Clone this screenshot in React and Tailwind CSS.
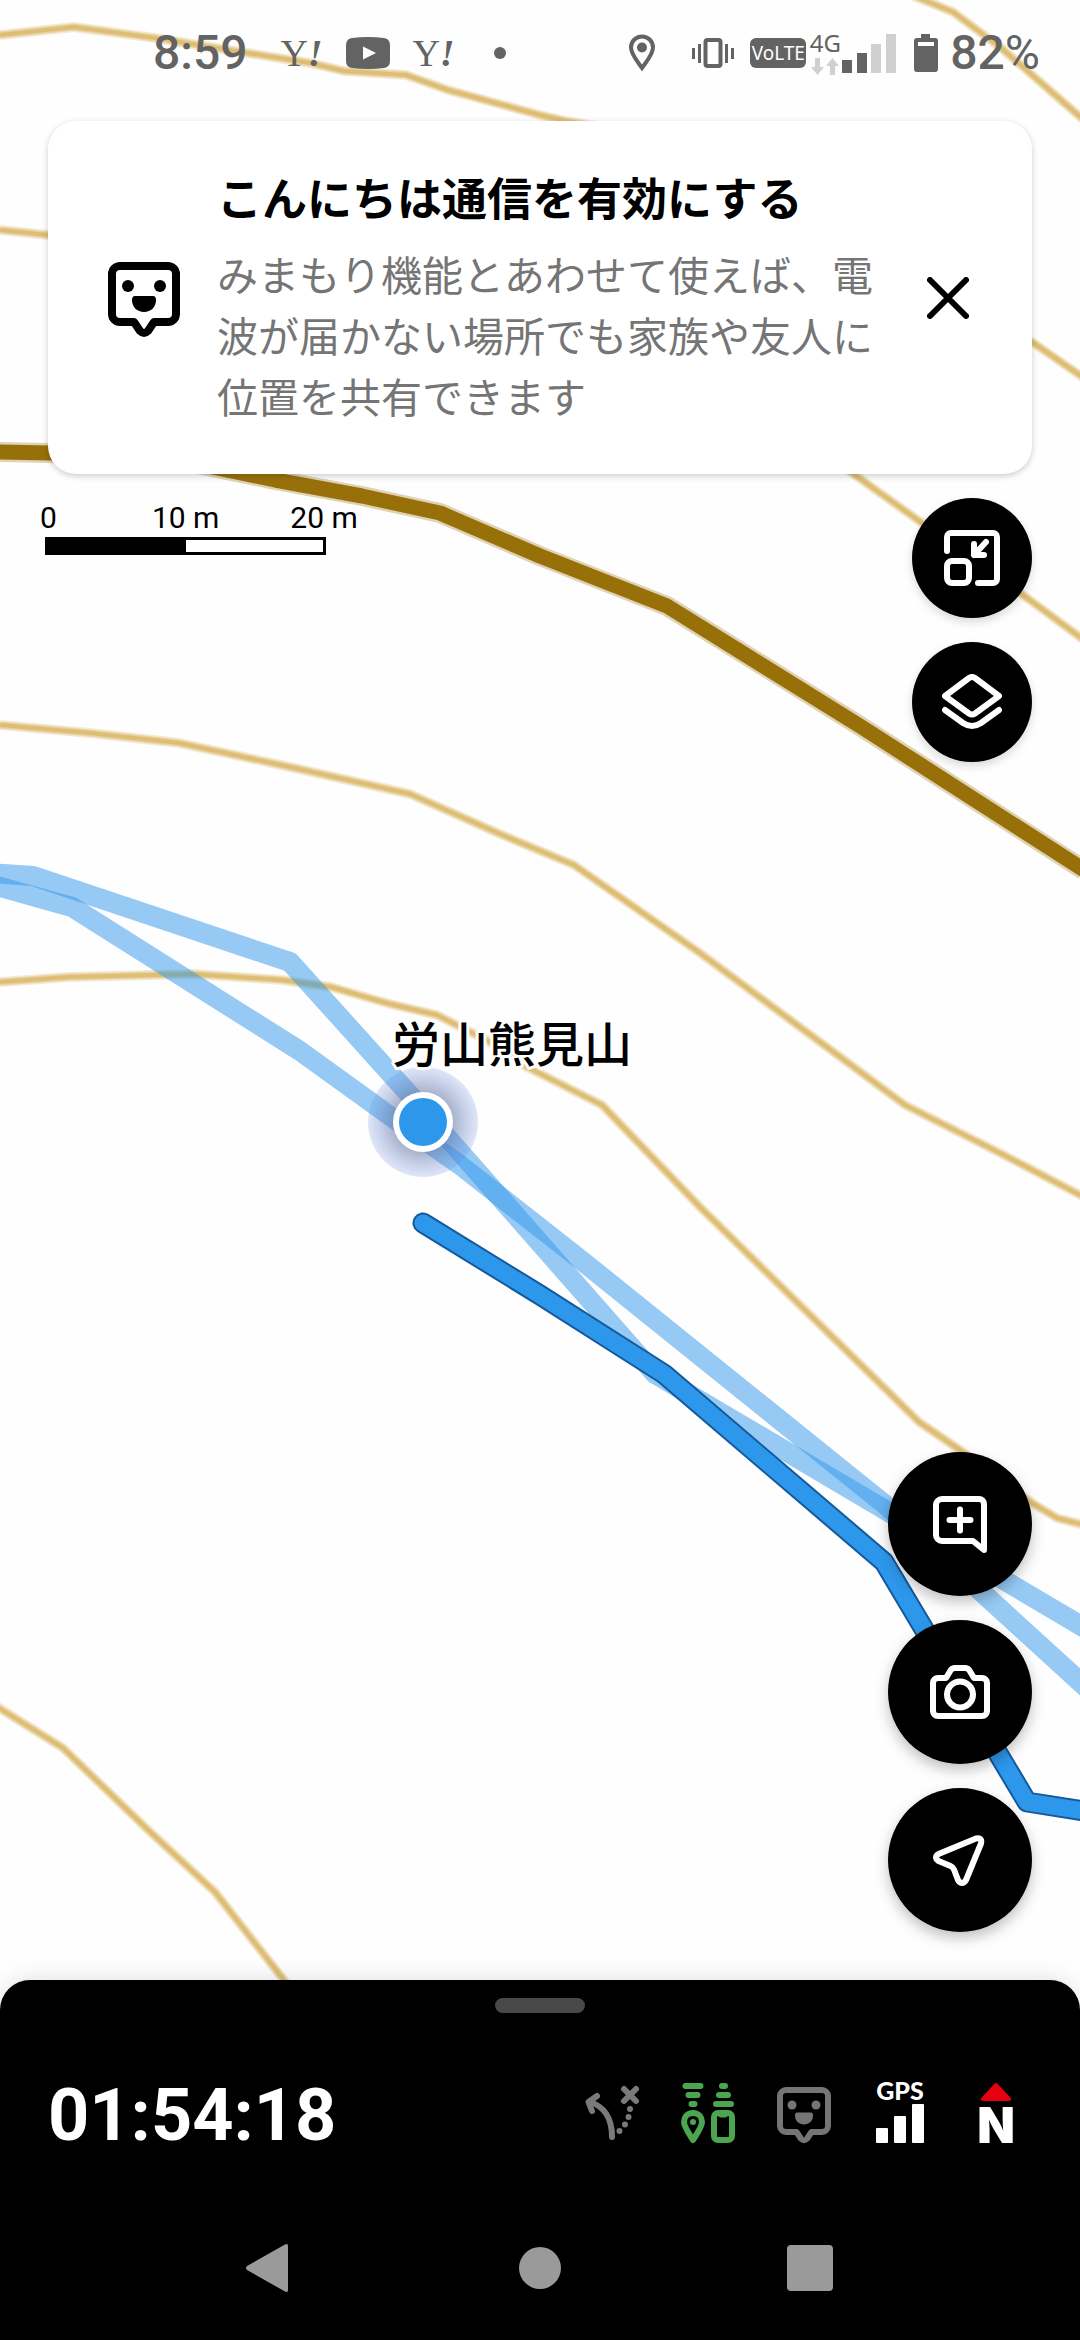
import React from 'react';

const CONTOURS = [
    '0,35 74,27 155,38 241,52 310,63 344,71 406,75 448,90 540,115 566,121 620,130 740,300 848,470 922,523 1023,595 1084,640',
    '914,-4 953,12 1000,47 1070,108 1084,120',
    '0,230 48,235 400,240 800,260 1032,342 1084,378',
    '0,725 90,733 179,743 290,767 410,794 500,834 574,865 700,953 905,1105 1000,1153 1084,1197',
    '0,982 69,977 193,974 282,980 331,987 390,1004 437,1015 490,1042 527,1067 602,1105 700,1207 857,1361 919,1422 960,1450 1032,1503 1057,1518 1084,1525',
    '-4,1706 63,1748 147,1829 215,1892 287,1984',
];

const MAIN_CONTOUR = '-4,452 50,453 193,463 275,480 362,496 440,513 540,556 667,606 860,726 1084,870';

const PAST_TRACKS = [
    '-10,873 33,876 290,962 409,1094 655,1374 1090,1631',
    '-10,884 72,907 300,1051 390,1116 460,1165 581,1260 888,1507 987,1597 1090,1691',
];

const CURRENT_TRACK = '423,1223 540,1295 664,1374 884,1562 1027,1802 1090,1812';

// Topographic map with the recorded tracks and current position
const MapCanvas = () => (
    <svg className="absolute inset-0 w-full h-full" viewBox="0 0 1080 2340" preserveAspectRatio="xMidYMin slice" aria-hidden="true">
        <defs>
            <radialGradient id="halo">
                <stop offset="50%" stopColor="#5c6a96" stopOpacity="0.55" />
                <stop offset="100%" stopColor="#6088dc" stopOpacity="0.2" />
            </radialGradient>
        </defs>
        <g fill="none" strokeLinejoin="round">
            {CONTOURS.map((points) => (
                <g key={points} stroke="#d6b056">
                    <polyline points={points} strokeWidth="10" strokeOpacity="0.25" />
                    <polyline points={points} strokeWidth="7" strokeOpacity="0.4" />
                    <polyline points={points} strokeWidth="4" strokeOpacity="0.6" />
                </g>
            ))}
            <g stroke="#98700a">
                <polyline points={MAIN_CONTOUR} strokeWidth="20" strokeOpacity="0.3" />
                <polyline points={MAIN_CONTOUR} strokeWidth="15" />
            </g>
            {PAST_TRACKS.map((points) => (
                <polyline key={points} points={points} stroke="#2d96ea" strokeOpacity="0.5" strokeWidth="20" />
            ))}
            <polyline points={CURRENT_TRACK} stroke="#14599c" strokeWidth="21" strokeLinecap="round" />
            <polyline points={CURRENT_TRACK} stroke="#2d97ec" strokeWidth="17" strokeLinecap="round" />
        </g>
        <circle cx="423" cy="1122" r="55" fill="url(#halo)" />
        <circle cx="423" cy="1122" r="30" fill="#fff" />
        <circle cx="423" cy="1122" r="24" fill="#2d97ec" />
        <text
            x="512"
            y="1062"
            textAnchor="middle"
            className="font-['Noto_Sans_CJK_JP',sans-serif] text-[48px] font-medium"
            stroke="#fff"
            strokeWidth="6"
            strokeLinejoin="round"
            paintOrder="stroke"
        >
            労山熊見山
        </text>
    </svg>
);

const YahooIcon = () => (
    <span className="flex w-11 justify-center font-['Liberation_Serif',serif] text-[38px] leading-none">
        Y<i className="font-bold">!</i>
    </span>
);

const StatusBar = () => (
    <header className="relative flex h-[106px] items-center justify-between pl-[153px] pr-10 text-[#636363]">
        <div className="flex items-center">
            <span className="mr-8 text-[48px] leading-none font-medium">8:59</span>
            <div className="flex items-center gap-[22px]">
                <YahooIcon />
                <svg className="w-11 h-8" viewBox="0 0 44 32" fill="currentColor">
                    <path fillRule="evenodd" d="M6 1Q22-1 38 1q6 1 6 7v16q0 6-6 7-16 2-32 0-6-1-6-7V8q0-6 6-7zM17 9.500v13l13-6.500z" />
                </svg>
                <YahooIcon />
                <svg className="w-11 h-3" viewBox="0 0 44 12" fill="currentColor">
                    <circle cx="22" cy="6" r="6" />
                </svg>
            </div>
        </div>
        <div className="flex items-center">
            <svg className="mr-9 w-7 h-[38px]" viewBox="0 0 28 38">
                <path d="M14 2.500C7.500 2.500 3 7.500 3 13.500c0 7 8 16 11 20.500 3-4.500 11-13.500 11-20.500 0-6-4.500-11-11-11z" fill="none" stroke="currentColor" strokeWidth="4" />
                <circle cx="14" cy="13.500" r="5" fill="currentColor" />
            </svg>
            <svg className="mr-4 w-[42px] h-8" viewBox="0 0 42 32" fill="currentColor">
                <rect x="13.500" y="3" width="15" height="26" rx="2" fill="none" stroke="currentColor" strokeWidth="4" />
                <path d="M0 11h3v11H0zM6 7h3v19H6zM33 7h3v19h-3zM39 11h3v11h-3z" />
            </svg>
            <span className="mr-1 flex h-[30px] w-14 items-center justify-center rounded-[6px] bg-[#636363] font-['Liberation_Sans_Narrow','Noto_Sans',sans-serif] text-[19px] leading-none text-white">
                VoLTE
            </span>
            <div className="mr-[2px] flex w-[30px] flex-col items-center gap-1">
                <span className="font-['Noto_Sans',sans-serif] text-[24px] leading-[22px]">4G</span>
                <svg className="w-7 h-[17px]" viewBox="0 0 28 17" fill="#d0d0d0">
                    <path d="M4 0h5v9h4l-6.500 8L0 9h4zM19 17h5V8h4l-6.500-8L15 8h4z" />
                </svg>
            </div>
            <svg className="mr-4 w-14 h-10" viewBox="0 0 56 40">
                <path d="M0 27h10v13H0zM15 20h10v20H15z" fill="currentColor" />
                <path d="M29 11h10v29H29zM44 1h10v39H44z" fill="#d0d0d0" />
            </svg>
            <svg className="mr-3 w-6 h-[38px]" viewBox="0 0 24 38" fill="currentColor">
                <path fillRule="evenodd" d="M7 0h9v4h5q3 0 3 3v28q0 3-3 3H3q-3 0-3-3V7q0-3 3-3h4zM4 8v4h16V8z" />
            </svg>
            <span className="text-[48px] leading-none font-medium">
                82<span className="font-normal">%</span>
            </span>
        </div>
    </header>
);

// Speech bubble face, shared by the banner and the bottom sheet
const FaceIcon = ({ className }) => (
    <svg className={className} viewBox="0 0 72 76" fill="currentColor">
        <path d="M12 4H60a8 8 0 0 1 8 8V52a8 8 0 0 1-8 8H46L40 69Q36 73 32 69L26 60H12a8 8 0 0 1-8-8V12a8 8 0 0 1 8-8z" fill="none" stroke="currentColor" strokeWidth="8" strokeLinejoin="round" />
        <circle cx="20" cy="24" r="6" />
        <circle cx="52" cy="24" r="6" />
        <path d="M27 34H45q3 0 3 4c0 7-5 12-12 12s-12-5-12-12q0-4 3-4z" />
    </svg>
);

const Banner = () => (
    <section className="mx-12 mt-[15px] flex items-center rounded-[28px] bg-white py-11 pl-[60px] pr-12 shadow-[0_2px_6px_rgba(0,0,0,0.2)] font-['Noto_Sans_CJK_JP',sans-serif]">
        <FaceIcon className="mt-1 w-[72px] h-[76px] shrink-0" />
        <div className="ml-[37px] mr-6 flex-1 pb-1">
            <h2 className="text-[45px] leading-[64px] font-bold text-black">こんにちは通信を有効にする</h2>
            <p className="mt-[14px] text-[41px] leading-[61px] text-[#757575]">
                みまもり機能とあわせて使えば、電波が届かない場所でも家族や友人に位置を共有できます
            </p>
        </div>
        <button type="button" aria-label="閉じる" className="flex size-[72px] items-center justify-center">
            <svg className="size-[42px]" viewBox="0 0 42 42" fill="none" stroke="currentColor" strokeWidth="6" strokeLinecap="round">
                <path d="M3 3L39 39M39 3L3 39" />
            </svg>
        </button>
    </section>
);

const ScaleBar = () => (
    <div className="text-[30px] leading-[39px]">
        <div className="flex">
            <span>0</span>
            <span className="ml-[95px]">10 m</span>
            <span className="ml-[71px]">20 m</span>
        </div>
        <div className="ml-[5px] flex h-[18px] w-[281px] border-3 border-black bg-white">
            <div className="w-1/2 bg-black" />
        </div>
    </div>
);

const RoundButton = ({ label, large, children }) => (
    <button
        type="button"
        aria-label={label}
        className={`flex items-center justify-center rounded-full bg-black text-white ${large ? 'size-36 shadow-[0_6px_14px_rgba(0,0,0,0.25)]' : 'size-[120px] shadow-[0_4px_10px_rgba(0,0,0,0.15)]'}`}
    >
        {children}
    </button>
);

const stroke = { fill: 'none', stroke: 'currentColor', strokeWidth: 6, strokeLinecap: 'round', strokeLinejoin: 'round' };

const MapTools = () => (
    <div className="flex flex-col gap-6">
        <RoundButton label="縮小表示">
            <svg className="size-14" viewBox="0 0 56 56" {...stroke}>
                <path d="M3 21V7a4 4 0 0 1 4-4H49a4 4 0 0 1 4 4V49a4 4 0 0 1-4 4H34" />
                <rect x="3" y="31" width="22" height="22" rx="5" />
                <path d="M42 12L30 25M30 14V25H40M31 20l4 4" />
            </svg>
        </RoundButton>
        <RoundButton label="レイヤー">
            <svg className="w-[60px] h-14" viewBox="0 0 60 56" {...stroke}>
                <path d="M27 4Q30 2 33 4L57 22 33 39.500Q30 41.500 27 39.500L3 22z" />
                <path d="M3 36L21 49Q30 55 39 49L57 36" />
            </svg>
        </RoundButton>
    </div>
);

const MapActions = () => (
    <div className="flex flex-1 flex-col items-end justify-end gap-6 pr-12 pb-12">
        <RoundButton label="メモを追加" large>
            <svg className="w-[54px] h-[57px]" viewBox="0 0 54 57" {...stroke}>
                <path d="M9 3H46a5 5 0 0 1 5 5V54L40 45H9a6 6 0 0 1-6-6V9a6 6 0 0 1 6-6z" />
                <path d="M16.500 24h21M27 13.500v21" />
            </svg>
        </RoundButton>
        <RoundButton label="カメラ" large>
            <svg className="w-[60px] h-[54px]" viewBox="0 0 60 54" {...stroke}>
                <path d="M8 13H16l4.500-7.500Q22 3 25 3H35q3 0 4.500 2.500L44 13H52a5 5 0 0 1 5 5V46a5 5 0 0 1-5 5H8a5 5 0 0 1-5-5V18a5 5 0 0 1 5-5z" />
                <circle cx="30" cy="29.500" r="13" />
            </svg>
        </RoundButton>
        <RoundButton label="現在地" large>
            <svg className="w-[54px] h-[51px]" viewBox="0 0 54 51" {...stroke}>
                <path d="M5.500 19L43 3.500Q49.500 2 48 8.500L33 45Q29 51 25 45L21 34.500Q20 32 17.500 31L5.500 26Q.5 22.500 5.500 19z" />
            </svg>
        </RoundButton>
    </div>
);

const SheetIcons = () => (
    <div className="flex gap-6">
        <svg className="size-[72px] text-[#7a7a7a]" viewBox="0 0 72 72" {...stroke}>
            <path d="M14 25C27 29 36 40 36 60" />
            <path d="M21 19L12.500 25 16 34" />
            <path d="M48 12L60 24M60 12L48 24" />
            <g fill="currentColor" stroke="none">
                <circle cx="54" cy="32" r="3" />
                <circle cx="52.500" cy="40" r="3" />
                <circle cx="49" cy="47.500" r="3" />
                <circle cx="43.500" cy="54" r="3" />
            </g>
        </svg>
        <svg className="size-[72px] text-[#4ba551]" viewBox="0 0 72 72" {...stroke}>
            <path d="M13.500 9h15M16.500 18h9M19.500 27h3M50 9h3M47 18h9M44 27h15" />
            <path d="M21 36C15 36 12 40.500 12 45c0 5 6 13 9 18 3-5 9-13 9-18 0-4.500-3-9-9-9z" />
            <circle cx="21" cy="45" r="3" fill="currentColor" stroke="none" />
            <rect x="42" y="36" width="18" height="27" rx="4" />
            <path d="M49 37.500h4" />
        </svg>
        <div className="flex size-[72px] items-center justify-center">
            <FaceIcon className="mt-1 w-[54px] h-[57px] text-[#757575]" />
        </div>
        <svg className="size-[72px] overflow-visible text-white" viewBox="0 0 72 72" fill="currentColor">
            <text x="36" y="23" textAnchor="middle" className="font-['Lato',sans-serif] text-[25px] font-black">GPS</text>
            <rect x="12" y="51" width="12" height="15" rx="1" />
            <rect x="30" y="39" width="12" height="27" rx="1" />
            <rect x="48" y="27" width="12" height="39" rx="1" />
        </svg>
        <svg className="size-[72px] overflow-visible text-white" viewBox="0 0 72 72" fill="currentColor">
            <path d="M36 8L49 22H23z" fill="#e60012" stroke="#e60012" strokeWidth="4" strokeLinejoin="round" />
            <text x="36" y="66" textAnchor="middle" className="font-['Inter',sans-serif] text-[49px] font-black">N</text>
        </svg>
    </div>
);

const BottomSheet = () => (
    <footer className="relative rounded-t-[30px] bg-black pt-[18px] text-white shadow-[0_0_24px_rgba(0,0,0,0.12)]">
        <div className="mx-auto h-[15px] w-[90px] rounded-full bg-[#494949]" />
        <div className="flex items-end justify-between px-12 pt-16 pb-[47px]">
            <span className="text-[72px] leading-[66px] font-bold">01:54:18</span>
            <SheetIcons />
        </div>
        <nav className="grid h-36 grid-cols-3 px-[12.5%] text-[#9a9a9a]">
            <button type="button" aria-label="戻る" className="flex items-center justify-center">
                <svg className="size-12" viewBox="0 0 48 48" fill="currentColor">
                    <path d="M39 .5Q42-1 42 2V46Q42 49 39 47.500L1 26Q-1 24 1 22z" />
                </svg>
            </button>
            <button type="button" aria-label="ホーム" className="flex items-center justify-center">
                <span className="size-[42px] rounded-full bg-[#9a9a9a]" />
            </button>
            <button type="button" aria-label="履歴" className="flex items-center justify-center">
                <span className="size-[46px] rounded-[4px] bg-[#9a9a9a]" />
            </button>
        </nav>
    </footer>
);

function App() {
    return (
        <div className="relative flex min-h-screen flex-col overflow-hidden bg-[#fefefe] font-['Roboto','Noto_Sans_CJK_JP',sans-serif] text-black">
            <MapCanvas />
            <StatusBar />
            <main className="relative flex flex-1 flex-col">
                <Banner />
                <div className="mt-6 flex items-start justify-between pl-10 pr-12">
                    <ScaleBar />
                    <MapTools />
                </div>
                <MapActions />
            </main>
            <BottomSheet />
        </div>
    );
}

export default App;
